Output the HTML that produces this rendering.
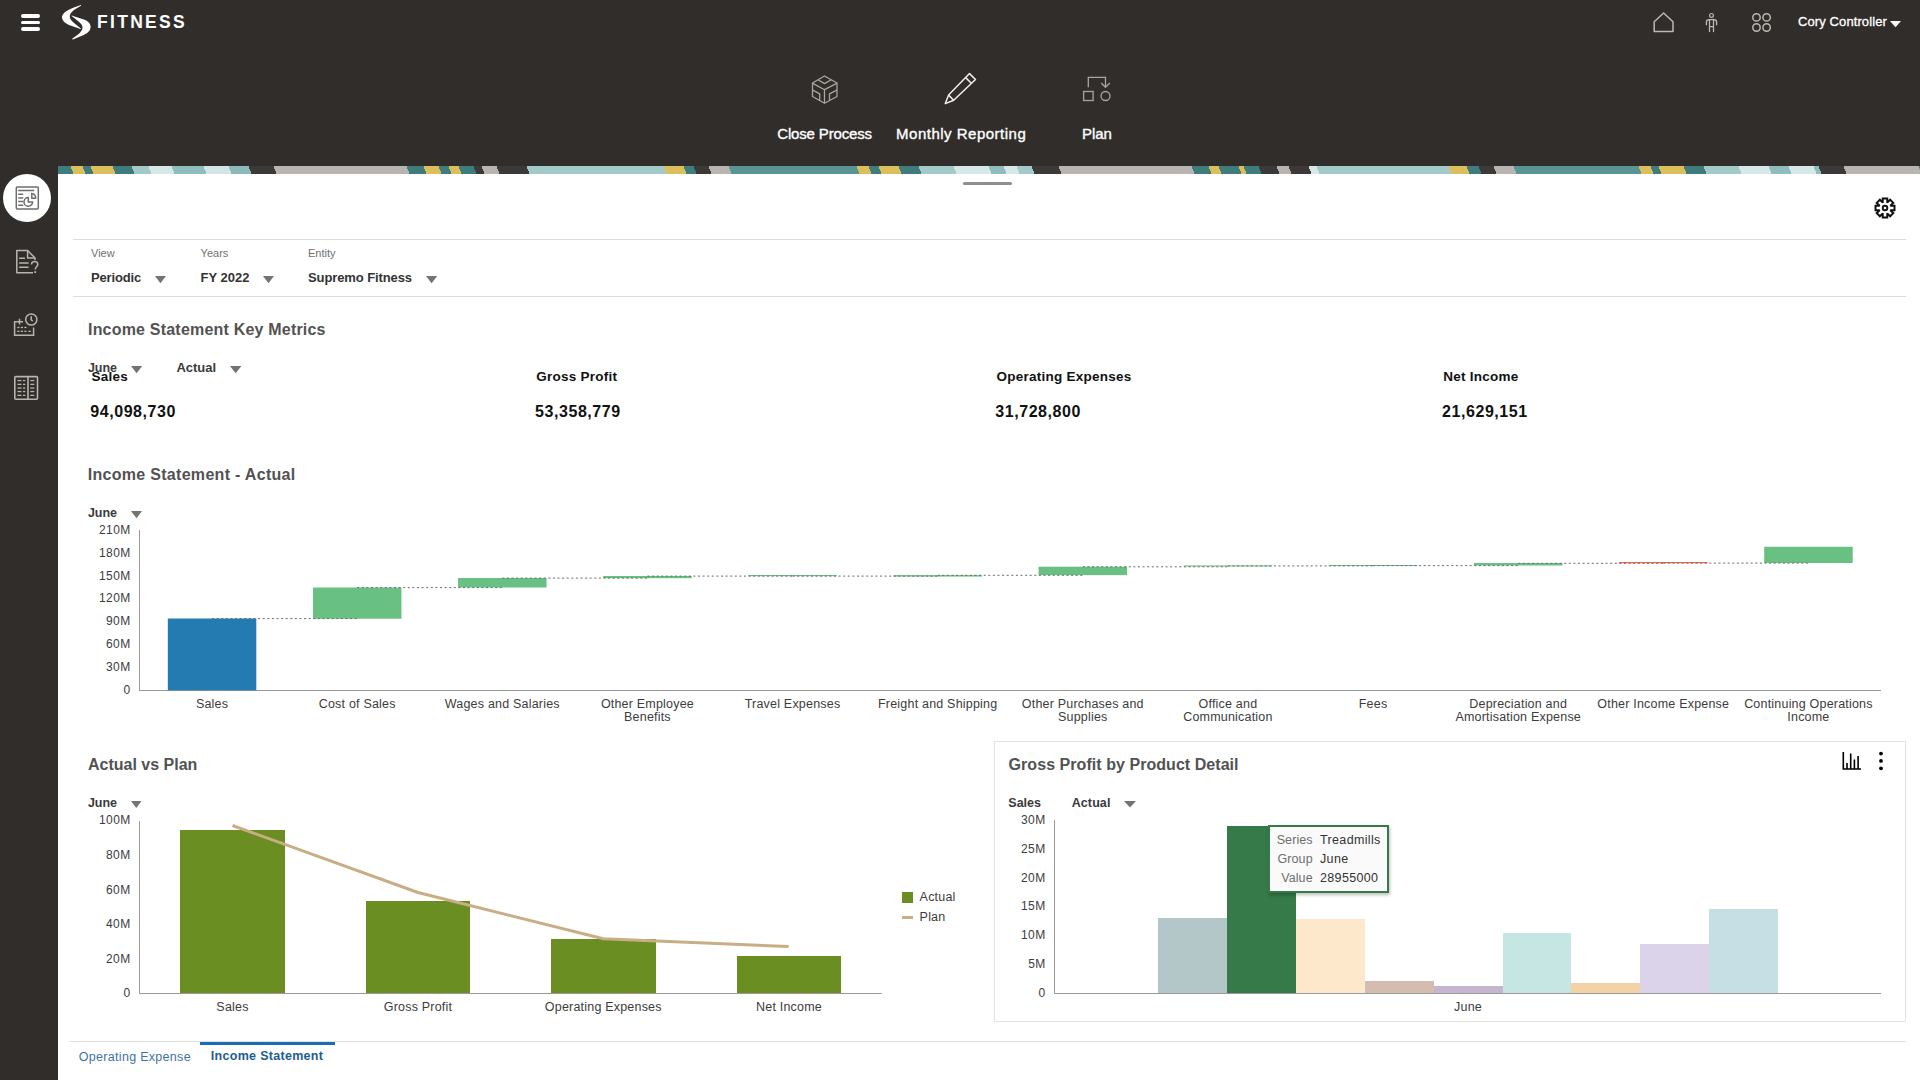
<!DOCTYPE html>
<html><head><meta charset="utf-8"><title>Fitness</title>
<style>
html,body{margin:0;padding:0;width:1920px;height:1080px;overflow:hidden;background:#fff;font-family:"Liberation Sans",sans-serif;}
.r{position:absolute;box-sizing:border-box;}
svg.r{overflow:visible;}
.t{position:absolute;white-space:nowrap;line-height:1;}
</style></head><body>
<div class="r" style="left:0.00px;top:0.00px;width:1920.00px;height:166.00px;background:#312d2a;"></div>
<div class="r" style="left:0.00px;top:166.00px;width:58.00px;height:914.00px;background:#312d2a;"></div>
<div class="r" style="left:58px;top:166px;width:1862px;height:8px;overflow:hidden;background:#3e7c7e"><div class="r" style="left:0;top:0;width:1862px;height:8px;transform:skewX(20deg);background:linear-gradient(90deg,#3e7c7e 0px 14px,#dcbf5a 14px 26px,#3e7c7e 26px 34px,#dcbf5a 34px 56px,#3e7c7e 56px 75px,#a3c9c9 75px 92px,#d6e8e8 92px 115px,#8fbdbd 115px 147px,#d3e6e6 147px 172px,#8cbaba 172px 192px,#3b3a38 192px 217px,#b8b5b0 217px 350px,#3e7c7e 350px 367px,#dcbf5a 367px 382px,#3e7c7e 382px 392px,#dcbf5a 392px 402px,#3e7c7e 402px 417px,#3b3a38 417px 425px,#b8b5b0 425px 440px,#3b3a38 440px 470px,#a3c9c9 470px 607px,#dcbf5a 607px 627px,#3e7c7e 627px 637px,#3b3a38 637px 652px,#b8b5b0 652px 672px,#5a9595 672px 800px,#dcbf5a 800px 812px,#3e7c7e 812px 822px,#dcbf5a 822px 842px,#3e7c7e 842px 862px,#a3c9c9 862px 897px,#d6e8e8 897px 932px,#8fbdbd 932px 947px,#d6e8e8 947px 960px,#a3c9c9 960px 975px,#3b3a38 975px 1002px,#b8b5b0 1002px 1135px,#3e7c7e 1135px 1152px,#dcbf5a 1152px 1162px,#3e7c7e 1162px 1182px,#dcbf5a 1182px 1187px,#3e7c7e 1187px 1202px,#3b3a38 1202px 1220px,#b8b5b0 1220px 1232px,#3b3a38 1232px 1252px,#d6e8e8 1252px 1260px,#a3c9c9 1260px 1392px,#dcbf5a 1392px 1410px,#3e7c7e 1410px 1422px,#3b3a38 1422px 1437px,#b8b5b0 1437px 1457px,#5a9595 1457px 1582px,#dcbf5a 1582px 1594px,#3e7c7e 1594px 1602px,#dcbf5a 1602px 1627px,#3e7c7e 1627px 1647px,#a3c9c9 1647px 1682px,#d6e8e8 1682px 1712px,#8fbdbd 1712px 1732px,#d6e8e8 1732px 1757px,#8fbdbd 1757px 1762px,#3b3a38 1762px 1787px,#b8b5b0 1787px 1862px)"></div></div>
<div class="r" style="left:21.00px;top:14.00px;width:19.00px;height:3.60px;background:#fff;border-radius:2px;"></div>
<div class="r" style="left:21.00px;top:20.50px;width:19.00px;height:3.60px;background:#fff;border-radius:2px;"></div>
<div class="r" style="left:21.00px;top:27.00px;width:19.00px;height:3.60px;background:#fff;border-radius:2px;"></div>
<svg class="r" style="left:56px;top:0px" width="44" height="44" viewBox="0 0 44 44"><path fill="#fff" d="M24.6 4.9C20 6.5 12 9.5 8.5 12.5C6.5 14.3 5.8 16.5 6 18C6.5 21 9 23.3 13 25L24.4 28.9C24.9 29 25 28.5 24.5 28.2L17.5 22.5C14.8 20.3 13.6 18.2 13.8 16C14 14 15.5 12 18 10L24.9 5.8C25.3 5.4 25 4.8 24.6 4.9Z"/><path fill="#fff" d="M15.7 15.4C15.4 15.6 15.6 16 16 16.3L22.5 21.5C25.5 23.8 26.8 25.8 26.5 28C26.2 30.3 24.5 32.3 22 34.5L16.5 38.6C16 39 16.3 39.6 16.8 39.4L26 35.8C31 33.8 34.6 31 34.6 26.8C34.6 23 31.5 20.8 27 19.3Z"/></svg>
<div class="t" style="left:97.00px;top:13.79px;font-size:17.5px;font-weight:700;color:#fff;letter-spacing:2.3px;">FITNESS</div>
<svg class="r" style="left:1650px;top:10px" width="26" height="26" viewBox="0 0 26 26"><path d="M4.2 21.5V11.8L13.6 3L23 11.8V21.5Z" fill="none" stroke="#bdb8b1" stroke-width="1.5" stroke-linejoin="round"/></svg>
<svg class="r" style="left:1700px;top:10px" width="24" height="24" viewBox="0 0 24 24"><circle cx="11.5" cy="5.4" r="1.9" fill="none" stroke="#bdb8b1" stroke-width="1.2"/><path d="M6.4 14.8V12.3Q6.4 9.7 9 9.7H14Q16.6 9.7 16.6 12.3V14.8M9.5 9.7V21.6M13.5 9.7V21.6M9.5 16.6H13.5" fill="none" stroke="#bdb8b1" stroke-width="1.3" stroke-linecap="round"/></svg>
<svg class="r" style="left:1748px;top:9px" width="26" height="26" viewBox="0 0 26 26"><g fill="none" stroke="#bdb8b1" stroke-width="1.5"><circle cx="8.5" cy="8.4" r="3.7"/><circle cx="18.6" cy="8.4" r="3.7"/><circle cx="8.5" cy="18.5" r="3.7"/><circle cx="18.6" cy="18.5" r="3.7"/></g></svg>
<div class="t" style="left:1798.00px;top:15.00px;font-size:13px;color:#fff;letter-spacing:0.1px;-webkit-text-stroke:0.3px #fff;">Cory Controller</div>
<svg class="r" style="left:1890px;top:20.5px" width="11" height="6.300000000000001" viewBox="0 0 11 6.300000000000001"><path d="M0 0H11L5.5 6.300000000000001Z" fill="#fff"/></svg>
<svg class="r" style="left:800px;top:65px" width="50" height="50" viewBox="0 0 50 50"><g fill="none" stroke="#aaa59f" stroke-width="1.3" stroke-linejoin="round">
<path d="M24.5 11L37 18V31.5L24.5 38.3L12.5 31.5V18Z"/>
<path d="M12.8 18.4L24.5 24.7L36.7 18.4M24.5 24.7V38"/>
<path d="M18 14.7L24.5 18.6L31.3 14.7"/>
<path d="M12.8 25.2L19.7 28.8V35.5"/><path d="M36.7 25.2L29.5 28.8V35.5"/>
</g></svg>
<svg class="r" style="left:935px;top:65px" width="50" height="50" viewBox="0 0 50 50"><g fill="none" stroke="#f2efea" stroke-width="1.5" stroke-linejoin="round">
<path d="M34.5 8.6L40.5 14.5L18.7 35.3L10.3 38.6L13.6 30.1Z"/>
<path d="M30.5 12.4L36.3 18.2M13.6 30.1L18.7 35.3"/>
</g></svg>
<svg class="r" style="left:1072px;top:65px" width="50" height="50" viewBox="0 0 50 50"><g fill="none" stroke="#aaa59f" stroke-width="1.3">
<path d="M16.3 22.3V12.3H33.5V22"/><path d="M29.2 18L33.5 22.3L37.8 18"/>
<rect x="11.6" y="26.5" width="9.5" height="9"/><circle cx="33.5" cy="31" r="4.5"/>
</g></svg>
<div class="t" style="left:524.60px;width:600px;text-align:center;top:125.80px;font-size:15px;color:#fff;letter-spacing:-0.15px;-webkit-text-stroke:0.35px #fff;">Close Process</div>
<div class="t" style="left:661.20px;width:600px;text-align:center;top:125.80px;font-size:15px;color:#fff;letter-spacing:0.5px;-webkit-text-stroke:0.35px #fff;">Monthly Reporting</div>
<div class="t" style="left:796.90px;width:600px;text-align:center;top:125.80px;font-size:15px;color:#fff;-webkit-text-stroke:0.35px #fff;">Plan</div>
<div class="r" style="left:2.8px;top:173.7px;width:48.4px;height:48.4px;border-radius:50%;background:#fff"></div>
<svg class="r" style="left:0;top:170px" width="56" height="56" viewBox="0 0 56 56"><g fill="none" stroke="#6e6e6e" stroke-width="1.5">
<rect x="16.3" y="17" width="22" height="22" rx="1"/>
<path d="M18.2 20.5H34.3M18.2 24.3H23.2M18.2 28H23.2M18.2 31.5H23.2M18.2 35.3H23.2"/>
<path d="M28.3 27.6A4.3 4.3 0 1 0 32.6 31.9H28.3Z"/>
<path d="M31.8 23.6V28.2H35.6A4 4 0 0 0 31.8 23.6Z"/>
</g></svg>
<svg class="r" style="left:0;top:236px" width="56" height="56" viewBox="0 0 56 56"><g fill="none" stroke="#b8b4ae" stroke-width="1.5" stroke-linejoin="round">
<path d="M33 36.8H16.8V14.5H27.6L35 22V24"/><path d="M27.6 14.5V22H35"/>
<path d="M19.2 22.3H25M19.2 27H28.6M19.2 31.3H28.6"/>
<path d="M31.5 28.5C31.5 26.5 33 25.5 34.7 25.5C36.5 25.5 37.8 26.7 37.8 28.3C37.8 30.5 35.2 31 35.2 33.5"/>
</g><rect x="34.3" y="35.2" width="1.8" height="1.8" fill="#b8b4ae"/></svg>
<svg class="r" style="left:0;top:298px" width="56" height="56" viewBox="0 0 56 56"><g fill="none" stroke="#b8b4ae" stroke-width="1.5">
<path d="M16.8 23.8H14.6V37.2H33.6V29.5"/><path d="M19.5 20.8V26.6M16.6 23.8H23"/>
<circle cx="31.3" cy="21.5" r="5.6"/><path d="M31.2 18.3V21.8L32.8 23"/>
</g><g fill="#b8b4ae"><rect x="17.3" y="28.8" width="2.2" height="1.3"/><rect x="20.8" y="28.8" width="2.2" height="1.3"/><rect x="24.3" y="28.8" width="2.2" height="1.3"/>
<rect x="17.3" y="32.7" width="2.2" height="1.3"/><rect x="20.8" y="32.7" width="2.2" height="1.3"/><rect x="24.3" y="32.7" width="2.2" height="1.3"/><rect x="28.5" y="32.7" width="2.2" height="1.3"/></g></svg>
<svg class="r" style="left:0;top:360px" width="56" height="56" viewBox="0 0 56 56"><g fill="none" stroke="#b8b4ae" stroke-width="1.6">
<rect x="14.8" y="16.6" width="22.7" height="22.7" rx="1"/><path d="M28 16.6V39.3"/></g>
<g fill="#b8b4ae"><rect x="17.5" y="19.9" width="4" height="1.3"/><rect x="23" y="19.9" width="2.3" height="1.3"/><rect x="30.3" y="19.9" width="4" height="1.3"/><rect x="17.5" y="23.7" width="4" height="1.3"/><rect x="23" y="23.7" width="2.3" height="1.3"/><rect x="30.3" y="23.7" width="4" height="1.3"/><rect x="17.5" y="27.4" width="4" height="1.3"/><rect x="23" y="27.4" width="2.3" height="1.3"/><rect x="30.3" y="27.4" width="4" height="1.3"/><rect x="17.5" y="30.9" width="4" height="1.3"/><rect x="23" y="30.9" width="2.3" height="1.3"/><rect x="30.3" y="30.9" width="4" height="1.3"/><rect x="17.5" y="34.7" width="4" height="1.3"/><rect x="23" y="34.7" width="2.3" height="1.3"/><rect x="30.3" y="34.7" width="4" height="1.3"/></g></svg>
<div class="r" style="left:963.00px;top:182.00px;width:48.70px;height:2.90px;background:#8f8f8f;border-radius:2px;"></div>
<svg class="r" style="left:1870px;top:193px" width="30" height="30" viewBox="0 0 30 30"><path d="M12.75 9.01L12.75 5.51L17.25 5.51L17.25 9.01L17.65 9.17L20.12 6.70L23.30 9.88L20.83 12.35L20.99 12.75L24.49 12.75L24.49 17.25L20.99 17.25L20.83 17.65L23.30 20.12L20.12 23.30L17.65 20.83L17.25 20.99L17.25 24.49L12.75 24.49L12.75 20.99L12.35 20.83L9.88 23.30L6.70 20.12L9.17 17.65L9.01 17.25L5.51 17.25L5.51 12.75L9.01 12.75L9.17 12.35L6.70 9.88L9.88 6.70L12.35 9.17Z" fill="none" stroke="#111" stroke-width="2" stroke-linejoin="miter"/><circle cx="15" cy="15" r="2.3" fill="none" stroke="#111" stroke-width="1.9"/></svg>
<div class="r" style="left:73.00px;top:239.00px;width:1833.00px;height:1.00px;background:#dcdcdc;"></div>
<div class="r" style="left:73.00px;top:296.00px;width:1833.00px;height:1.00px;background:#dcdcdc;"></div>
<div class="t" style="left:91.00px;top:247.69px;font-size:11px;color:#6f6f6f;">View</div>
<div class="t" style="left:200.60px;top:247.69px;font-size:11px;color:#6f6f6f;">Years</div>
<div class="t" style="left:308.00px;top:247.69px;font-size:11px;color:#6f6f6f;">Entity</div>
<div class="t" style="left:91.00px;top:271.00px;font-size:13px;font-weight:700;color:#333;letter-spacing:-0.15px;">Periodic</div>
<svg class="r" style="left:155.4px;top:275.8px" width="10.900000000000006" height="7.199999999999989" viewBox="0 0 10.900000000000006 7.199999999999989"><path d="M0 0H10.900000000000006L5.450000000000003 7.199999999999989Z" fill="#737373"/></svg>
<div class="t" style="left:200.60px;top:271.00px;font-size:13px;font-weight:700;color:#333;">FY 2022</div>
<svg class="r" style="left:263px;top:275.8px" width="11" height="7.199999999999989" viewBox="0 0 11 7.199999999999989"><path d="M0 0H11L5.5 7.199999999999989Z" fill="#737373"/></svg>
<div class="t" style="left:308.00px;top:271.00px;font-size:13px;font-weight:700;color:#333;letter-spacing:-0.1px;">Supremo Fitness</div>
<svg class="r" style="left:425.6px;top:275.8px" width="11.199999999999989" height="7.199999999999989" viewBox="0 0 11.199999999999989 7.199999999999989"><path d="M0 0H11.199999999999989L5.599999999999994 7.199999999999989Z" fill="#737373"/></svg>
<div class="t" style="left:88.00px;top:322.26px;font-size:16px;font-weight:700;color:#525252;letter-spacing:0.2px;">Income Statement Key Metrics</div>
<div class="t" style="left:88.00px;top:361.72px;font-size:12.5px;font-weight:700;color:#3a3a3a;letter-spacing:-0.1px;">June</div>
<svg class="r" style="left:130.8px;top:365.8px" width="11.199999999999989" height="7.199999999999989" viewBox="0 0 11.199999999999989 7.199999999999989"><path d="M0 0H11.199999999999989L5.599999999999994 7.199999999999989Z" fill="#737373"/></svg>
<div class="t" style="left:176.40px;top:360.60px;font-size:13px;font-weight:700;color:#3a3a3a;">Actual</div>
<svg class="r" style="left:229.6px;top:365.8px" width="11.400000000000006" height="7.199999999999989" viewBox="0 0 11.400000000000006 7.199999999999989"><path d="M0 0H11.400000000000006L5.700000000000003 7.199999999999989Z" fill="#737373"/></svg>
<div class="t" style="left:91.50px;top:370.17px;font-size:13.5px;font-weight:700;color:#111;letter-spacing:0.25px;">Sales</div>
<div class="t" style="left:90.30px;top:404.06px;font-size:16px;font-weight:700;color:#111;letter-spacing:0.55px;">94,098,730</div>
<div class="t" style="left:536.30px;top:370.17px;font-size:13.5px;font-weight:700;color:#111;letter-spacing:0.25px;">Gross Profit</div>
<div class="t" style="left:535.10px;top:404.06px;font-size:16px;font-weight:700;color:#111;letter-spacing:0.55px;">53,358,779</div>
<div class="t" style="left:996.50px;top:370.17px;font-size:13.5px;font-weight:700;color:#111;letter-spacing:0.25px;">Operating Expenses</div>
<div class="t" style="left:995.30px;top:404.06px;font-size:16px;font-weight:700;color:#111;letter-spacing:0.55px;">31,728,800</div>
<div class="t" style="left:1443.30px;top:370.17px;font-size:13.5px;font-weight:700;color:#111;letter-spacing:0.25px;">Net Income</div>
<div class="t" style="left:1442.10px;top:404.06px;font-size:16px;font-weight:700;color:#111;letter-spacing:0.55px;">21,629,151</div>
<div class="t" style="left:87.70px;top:467.16px;font-size:16px;font-weight:700;color:#525252;letter-spacing:0.3px;">Income Statement - Actual</div>
<div class="t" style="left:88.00px;top:507.02px;font-size:12.5px;font-weight:700;color:#3a3a3a;letter-spacing:-0.1px;">June</div>
<svg class="r" style="left:131px;top:511px" width="11" height="7.2999999999999545" viewBox="0 0 11 7.2999999999999545"><path d="M0 0H11L5.5 7.2999999999999545Z" fill="#737373"/></svg>
<div class="r" style="left:139.00px;top:530.00px;width:1.00px;height:160.80px;background:#9a9a9a;"></div>
<div class="r" style="left:139.00px;top:690.00px;width:1742.00px;height:1.00px;background:#9a9a9a;"></div>
<div class="t" style="right:1789.50px;top:523.74px;font-size:12px;color:#3c3c3c;letter-spacing:0.35px;">210M</div>
<div class="t" style="right:1789.50px;top:546.66px;font-size:12px;color:#3c3c3c;letter-spacing:0.35px;">180M</div>
<div class="t" style="right:1789.50px;top:569.57px;font-size:12px;color:#3c3c3c;letter-spacing:0.35px;">150M</div>
<div class="t" style="right:1789.50px;top:592.48px;font-size:12px;color:#3c3c3c;letter-spacing:0.35px;">120M</div>
<div class="t" style="right:1789.50px;top:615.40px;font-size:12px;color:#3c3c3c;letter-spacing:0.35px;">90M</div>
<div class="t" style="right:1789.50px;top:638.31px;font-size:12px;color:#3c3c3c;letter-spacing:0.35px;">60M</div>
<div class="t" style="right:1789.50px;top:661.23px;font-size:12px;color:#3c3c3c;letter-spacing:0.35px;">30M</div>
<div class="t" style="right:1789.50px;top:684.14px;font-size:12px;color:#3c3c3c;letter-spacing:0.35px;">0</div>
<svg class="r" style="left:0;top:0" width="1920" height="1080" viewBox="0 0 1920 1080"><rect x="167.81" y="618.5" width="88.5" height="71.80" fill="#237bb1"/><rect x="312.94" y="587.5" width="88.5" height="31.25" fill="#68c182"/><rect x="458.06" y="578" width="88.5" height="9.50" fill="#68c182"/><rect x="603.19" y="576" width="88.5" height="2.20" fill="#68c182"/><rect x="748.31" y="575" width="88.5" height="1.20" fill="#68c182"/><rect x="893.44" y="575.1" width="88.5" height="1.50" fill="#68c182"/><rect x="1038.56" y="566.7" width="88.5" height="8.40" fill="#68c182"/><rect x="1183.69" y="565.4" width="88.5" height="1.10" fill="#68c182"/><rect x="1328.81" y="565" width="88.5" height="1.00" fill="#68c182"/><rect x="1473.94" y="563" width="88.5" height="2.50" fill="#68c182"/><rect x="1619.06" y="562" width="88.5" height="1.25" fill="#ed6647"/><rect x="1764.19" y="546.75" width="88.5" height="16.25" fill="#68c182"/><path d="M212.1 618.6H357.2" stroke="#6a6a6a" stroke-width="1" stroke-dasharray="2 2.6"/><path d="M357.2 587.6H502.3" stroke="#6a6a6a" stroke-width="1" stroke-dasharray="2 2.6"/><path d="M502.3 578.1H647.4" stroke="#6a6a6a" stroke-width="1" stroke-dasharray="2 2.6"/><path d="M647.4 576.1H792.6" stroke="#6a6a6a" stroke-width="1" stroke-dasharray="2 2.6"/><path d="M792.6 576.1H937.7" stroke="#6a6a6a" stroke-width="1" stroke-dasharray="2 2.6"/><path d="M937.7 575.3H1082.8" stroke="#6a6a6a" stroke-width="1" stroke-dasharray="2 2.6"/><path d="M1082.8 566.8H1227.9" stroke="#6a6a6a" stroke-width="1" stroke-dasharray="2 2.6"/><path d="M1227.9 565.9H1373.1" stroke="#6a6a6a" stroke-width="1" stroke-dasharray="2 2.6"/><path d="M1373.1 565.6H1518.2" stroke="#6a6a6a" stroke-width="1" stroke-dasharray="2 2.6"/><path d="M1518.2 563.3H1663.3" stroke="#6a6a6a" stroke-width="1" stroke-dasharray="2 2.6"/><path d="M1663.3 563.1H1808.4" stroke="#6a6a6a" stroke-width="1" stroke-dasharray="2 2.6"/></svg>
<div class="t" style="left:-87.94px;width:600px;text-align:center;top:698.12px;font-size:12.5px;color:#3c3c3c;letter-spacing:0.2px;line-height:13px;">Sales</div>
<div class="t" style="left:57.19px;width:600px;text-align:center;top:698.12px;font-size:12.5px;color:#3c3c3c;letter-spacing:0.2px;line-height:13px;">Cost of Sales</div>
<div class="t" style="left:202.31px;width:600px;text-align:center;top:698.12px;font-size:12.5px;color:#3c3c3c;letter-spacing:0.2px;line-height:13px;">Wages and Salaries</div>
<div class="t" style="left:347.44px;width:600px;text-align:center;top:698.12px;font-size:12.5px;color:#3c3c3c;letter-spacing:0.2px;line-height:13px;">Other Employee<br>Benefits</div>
<div class="t" style="left:492.56px;width:600px;text-align:center;top:698.12px;font-size:12.5px;color:#3c3c3c;letter-spacing:0.2px;line-height:13px;">Travel Expenses</div>
<div class="t" style="left:637.69px;width:600px;text-align:center;top:698.12px;font-size:12.5px;color:#3c3c3c;letter-spacing:0.2px;line-height:13px;">Freight and Shipping</div>
<div class="t" style="left:782.81px;width:600px;text-align:center;top:698.12px;font-size:12.5px;color:#3c3c3c;letter-spacing:0.2px;line-height:13px;">Other Purchases and<br>Supplies</div>
<div class="t" style="left:927.94px;width:600px;text-align:center;top:698.12px;font-size:12.5px;color:#3c3c3c;letter-spacing:0.2px;line-height:13px;">Office and<br>Communication</div>
<div class="t" style="left:1073.06px;width:600px;text-align:center;top:698.12px;font-size:12.5px;color:#3c3c3c;letter-spacing:0.2px;line-height:13px;">Fees</div>
<div class="t" style="left:1218.19px;width:600px;text-align:center;top:698.12px;font-size:12.5px;color:#3c3c3c;letter-spacing:0.2px;line-height:13px;">Depreciation and<br>Amortisation Expense</div>
<div class="t" style="left:1363.31px;width:600px;text-align:center;top:698.12px;font-size:12.5px;color:#3c3c3c;letter-spacing:0.2px;line-height:13px;">Other Income Expense</div>
<div class="t" style="left:1508.44px;width:600px;text-align:center;top:698.12px;font-size:12.5px;color:#3c3c3c;letter-spacing:0.2px;line-height:13px;">Continuing Operations<br>Income</div>
<div class="t" style="left:88.00px;top:757.16px;font-size:16px;font-weight:700;color:#525252;">Actual vs Plan</div>
<div class="t" style="left:88.00px;top:797.42px;font-size:12.5px;font-weight:700;color:#3a3a3a;letter-spacing:-0.1px;">June</div>
<svg class="r" style="left:131.3px;top:801px" width="10.5" height="7" viewBox="0 0 10.5 7"><path d="M0 0H10.5L5.25 7Z" fill="#737373"/></svg>
<div class="r" style="left:139.00px;top:820.50px;width:1.00px;height:173.00px;background:#9a9a9a;"></div>
<div class="r" style="left:139.00px;top:993.00px;width:743.30px;height:1.00px;background:#9a9a9a;"></div>
<div class="t" style="right:1789.50px;top:814.44px;font-size:12px;color:#3c3c3c;letter-spacing:0.35px;">100M</div>
<div class="t" style="right:1789.50px;top:849.04px;font-size:12px;color:#3c3c3c;letter-spacing:0.35px;">80M</div>
<div class="t" style="right:1789.50px;top:883.64px;font-size:12px;color:#3c3c3c;letter-spacing:0.35px;">60M</div>
<div class="t" style="right:1789.50px;top:918.24px;font-size:12px;color:#3c3c3c;letter-spacing:0.35px;">40M</div>
<div class="t" style="right:1789.50px;top:952.84px;font-size:12px;color:#3c3c3c;letter-spacing:0.35px;">20M</div>
<div class="t" style="right:1789.50px;top:987.44px;font-size:12px;color:#3c3c3c;letter-spacing:0.35px;">0</div>
<div class="r" style="left:180.00px;top:830.00px;width:104.50px;height:163.00px;background:#6b8e23;"></div>
<div class="r" style="left:365.50px;top:900.75px;width:104.50px;height:92.25px;background:#6b8e23;"></div>
<div class="r" style="left:550.80px;top:938.80px;width:105.00px;height:54.20px;background:#6b8e23;"></div>
<div class="r" style="left:736.50px;top:956.25px;width:104.70px;height:36.75px;background:#6b8e23;"></div>
<svg class="r" style="left:0;top:0" width="1920" height="1080" viewBox="0 0 1920 1080"><path d="M232.5 825.5L418 892.5L603.3 938.8L788.6 946.6" fill="none" stroke="#c9ad84" stroke-width="3" stroke-linejoin="round"/></svg>
<div class="t" style="left:-67.50px;width:600px;text-align:center;top:1001.12px;font-size:12.5px;color:#3c3c3c;letter-spacing:0.2px;">Sales</div>
<div class="t" style="left:118.00px;width:600px;text-align:center;top:1001.12px;font-size:12.5px;color:#3c3c3c;letter-spacing:0.2px;">Gross Profit</div>
<div class="t" style="left:303.30px;width:600px;text-align:center;top:1001.12px;font-size:12.5px;color:#3c3c3c;letter-spacing:0.2px;">Operating Expenses</div>
<div class="t" style="left:489.00px;width:600px;text-align:center;top:1001.12px;font-size:12.5px;color:#3c3c3c;letter-spacing:0.2px;">Net Income</div>
<div class="r" style="left:901.90px;top:891.70px;width:10.90px;height:11.20px;background:#6b8e23;"></div>
<div class="r" style="left:901.90px;top:915.80px;width:10.90px;height:2.80px;background:#c9ad84;"></div>
<div class="t" style="left:919.60px;top:890.92px;font-size:12.5px;color:#3c3c3c;letter-spacing:0.2px;">Actual</div>
<div class="t" style="left:919.60px;top:910.92px;font-size:12.5px;color:#3c3c3c;letter-spacing:0.2px;">Plan</div>
<div class="r" style="left:994px;top:741px;width:912px;height:281px;border:1px solid #e3e3e3"></div>
<div class="t" style="left:1008.60px;top:756.76px;font-size:16px;font-weight:700;color:#525252;letter-spacing:0.05px;">Gross Profit by Product Detail</div>
<div class="t" style="left:1008.30px;top:797.42px;font-size:12.5px;font-weight:700;color:#3a3a3a;">Sales</div>
<div class="t" style="left:1071.70px;top:797.42px;font-size:12.5px;font-weight:700;color:#3a3a3a;letter-spacing:0.1px;">Actual</div>
<svg class="r" style="left:1124.4px;top:801.4px" width="12.0" height="6.399999999999977" viewBox="0 0 12.0 6.399999999999977"><path d="M0 0H12.0L6.0 6.399999999999977Z" fill="#737373"/></svg>
<div class="r" style="left:1054.00px;top:820.30px;width:1.00px;height:173.20px;background:#9a9a9a;"></div>
<div class="r" style="left:1054.00px;top:993.00px;width:827.00px;height:1.00px;background:#9a9a9a;"></div>
<div class="t" style="right:874.50px;top:813.94px;font-size:12px;color:#3c3c3c;letter-spacing:0.35px;">30M</div>
<div class="t" style="right:874.50px;top:842.78px;font-size:12px;color:#3c3c3c;letter-spacing:0.35px;">25M</div>
<div class="t" style="right:874.50px;top:871.61px;font-size:12px;color:#3c3c3c;letter-spacing:0.35px;">20M</div>
<div class="t" style="right:874.50px;top:900.44px;font-size:12px;color:#3c3c3c;letter-spacing:0.35px;">15M</div>
<div class="t" style="right:874.50px;top:929.28px;font-size:12px;color:#3c3c3c;letter-spacing:0.35px;">10M</div>
<div class="t" style="right:874.50px;top:958.11px;font-size:12px;color:#3c3c3c;letter-spacing:0.35px;">5M</div>
<div class="t" style="right:874.50px;top:986.94px;font-size:12px;color:#3c3c3c;letter-spacing:0.35px;">0</div>
<div class="r" style="left:1158.00px;top:917.50px;width:68.91px;height:75.50px;background:#b3c6c8;"></div>
<div class="r" style="left:1226.91px;top:826.00px;width:68.91px;height:167.00px;background:#357a48;"></div>
<div class="r" style="left:1295.82px;top:918.60px;width:68.91px;height:74.40px;background:#fde8cb;"></div>
<div class="r" style="left:1364.73px;top:980.90px;width:68.91px;height:12.10px;background:#d5bcb0;"></div>
<div class="r" style="left:1433.64px;top:986.00px;width:68.91px;height:7.00px;background:#c5b5d0;"></div>
<div class="r" style="left:1502.56px;top:932.90px;width:68.91px;height:60.10px;background:#c6e6e4;"></div>
<div class="r" style="left:1571.47px;top:982.80px;width:68.91px;height:10.20px;background:#f3d2a8;"></div>
<div class="r" style="left:1640.38px;top:944.00px;width:68.91px;height:49.00px;background:#dbd3ea;"></div>
<div class="r" style="left:1709.29px;top:909.00px;width:68.91px;height:84.00px;background:#c6dfe5;"></div>
<div class="t" style="left:1168.00px;width:600px;text-align:center;top:1001.12px;font-size:12.5px;color:#3c3c3c;letter-spacing:0.2px;">June</div>
<div class="r" style="left:1268.4px;top:825.1px;width:120.4px;height:68px;border:2px solid #357a48;background:#fafafa;box-shadow:1px 2px 3px rgba(0,0,0,0.25)"></div>
<div class="t" style="right:607.30px;top:834.32px;font-size:12.5px;color:#6e6e6e;letter-spacing:0.1px;">Series</div>
<div class="t" style="left:1320.00px;top:834.32px;font-size:12.5px;color:#333;letter-spacing:0.35px;">Treadmills</div>
<div class="t" style="right:607.30px;top:853.02px;font-size:12.5px;color:#6e6e6e;letter-spacing:0.1px;">Group</div>
<div class="t" style="left:1320.00px;top:853.02px;font-size:12.5px;color:#333;letter-spacing:0.35px;">June</div>
<div class="t" style="right:607.30px;top:872.32px;font-size:12.5px;color:#6e6e6e;letter-spacing:0.1px;">Value</div>
<div class="t" style="left:1320.00px;top:872.32px;font-size:12.5px;color:#333;letter-spacing:0.35px;">28955000</div>
<svg class="r" style="left:1838px;top:748px" width="60" height="26" viewBox="0 0 60 26"><g fill="none" stroke="#000" stroke-width="1.6">
<path d="M5.3 4V21H23M9 15V21M12.7 5.5V21M16.4 11.5V21M20.1 8V21"/></g>
<circle cx="43" cy="5.6" r="1.9" fill="#000"/><circle cx="43" cy="12.9" r="1.9" fill="#000"/><circle cx="43" cy="20.3" r="1.9" fill="#000"/></svg>
<div class="r" style="left:69.00px;top:1041.00px;width:1837.00px;height:1.00px;background:#e0e0e0;"></div>
<div class="r" style="left:199.80px;top:1042.00px;width:135.20px;height:3.00px;background:#1a6cb3;"></div>
<div class="t" style="left:78.80px;top:1050.72px;font-size:12.5px;color:#3f73a6;letter-spacing:0.3px;">Operating Expense</div>
<div class="t" style="left:210.80px;top:1050.02px;font-size:12.5px;font-weight:700;color:#1f5c91;letter-spacing:0.3px;">Income Statement</div>
</body></html>
